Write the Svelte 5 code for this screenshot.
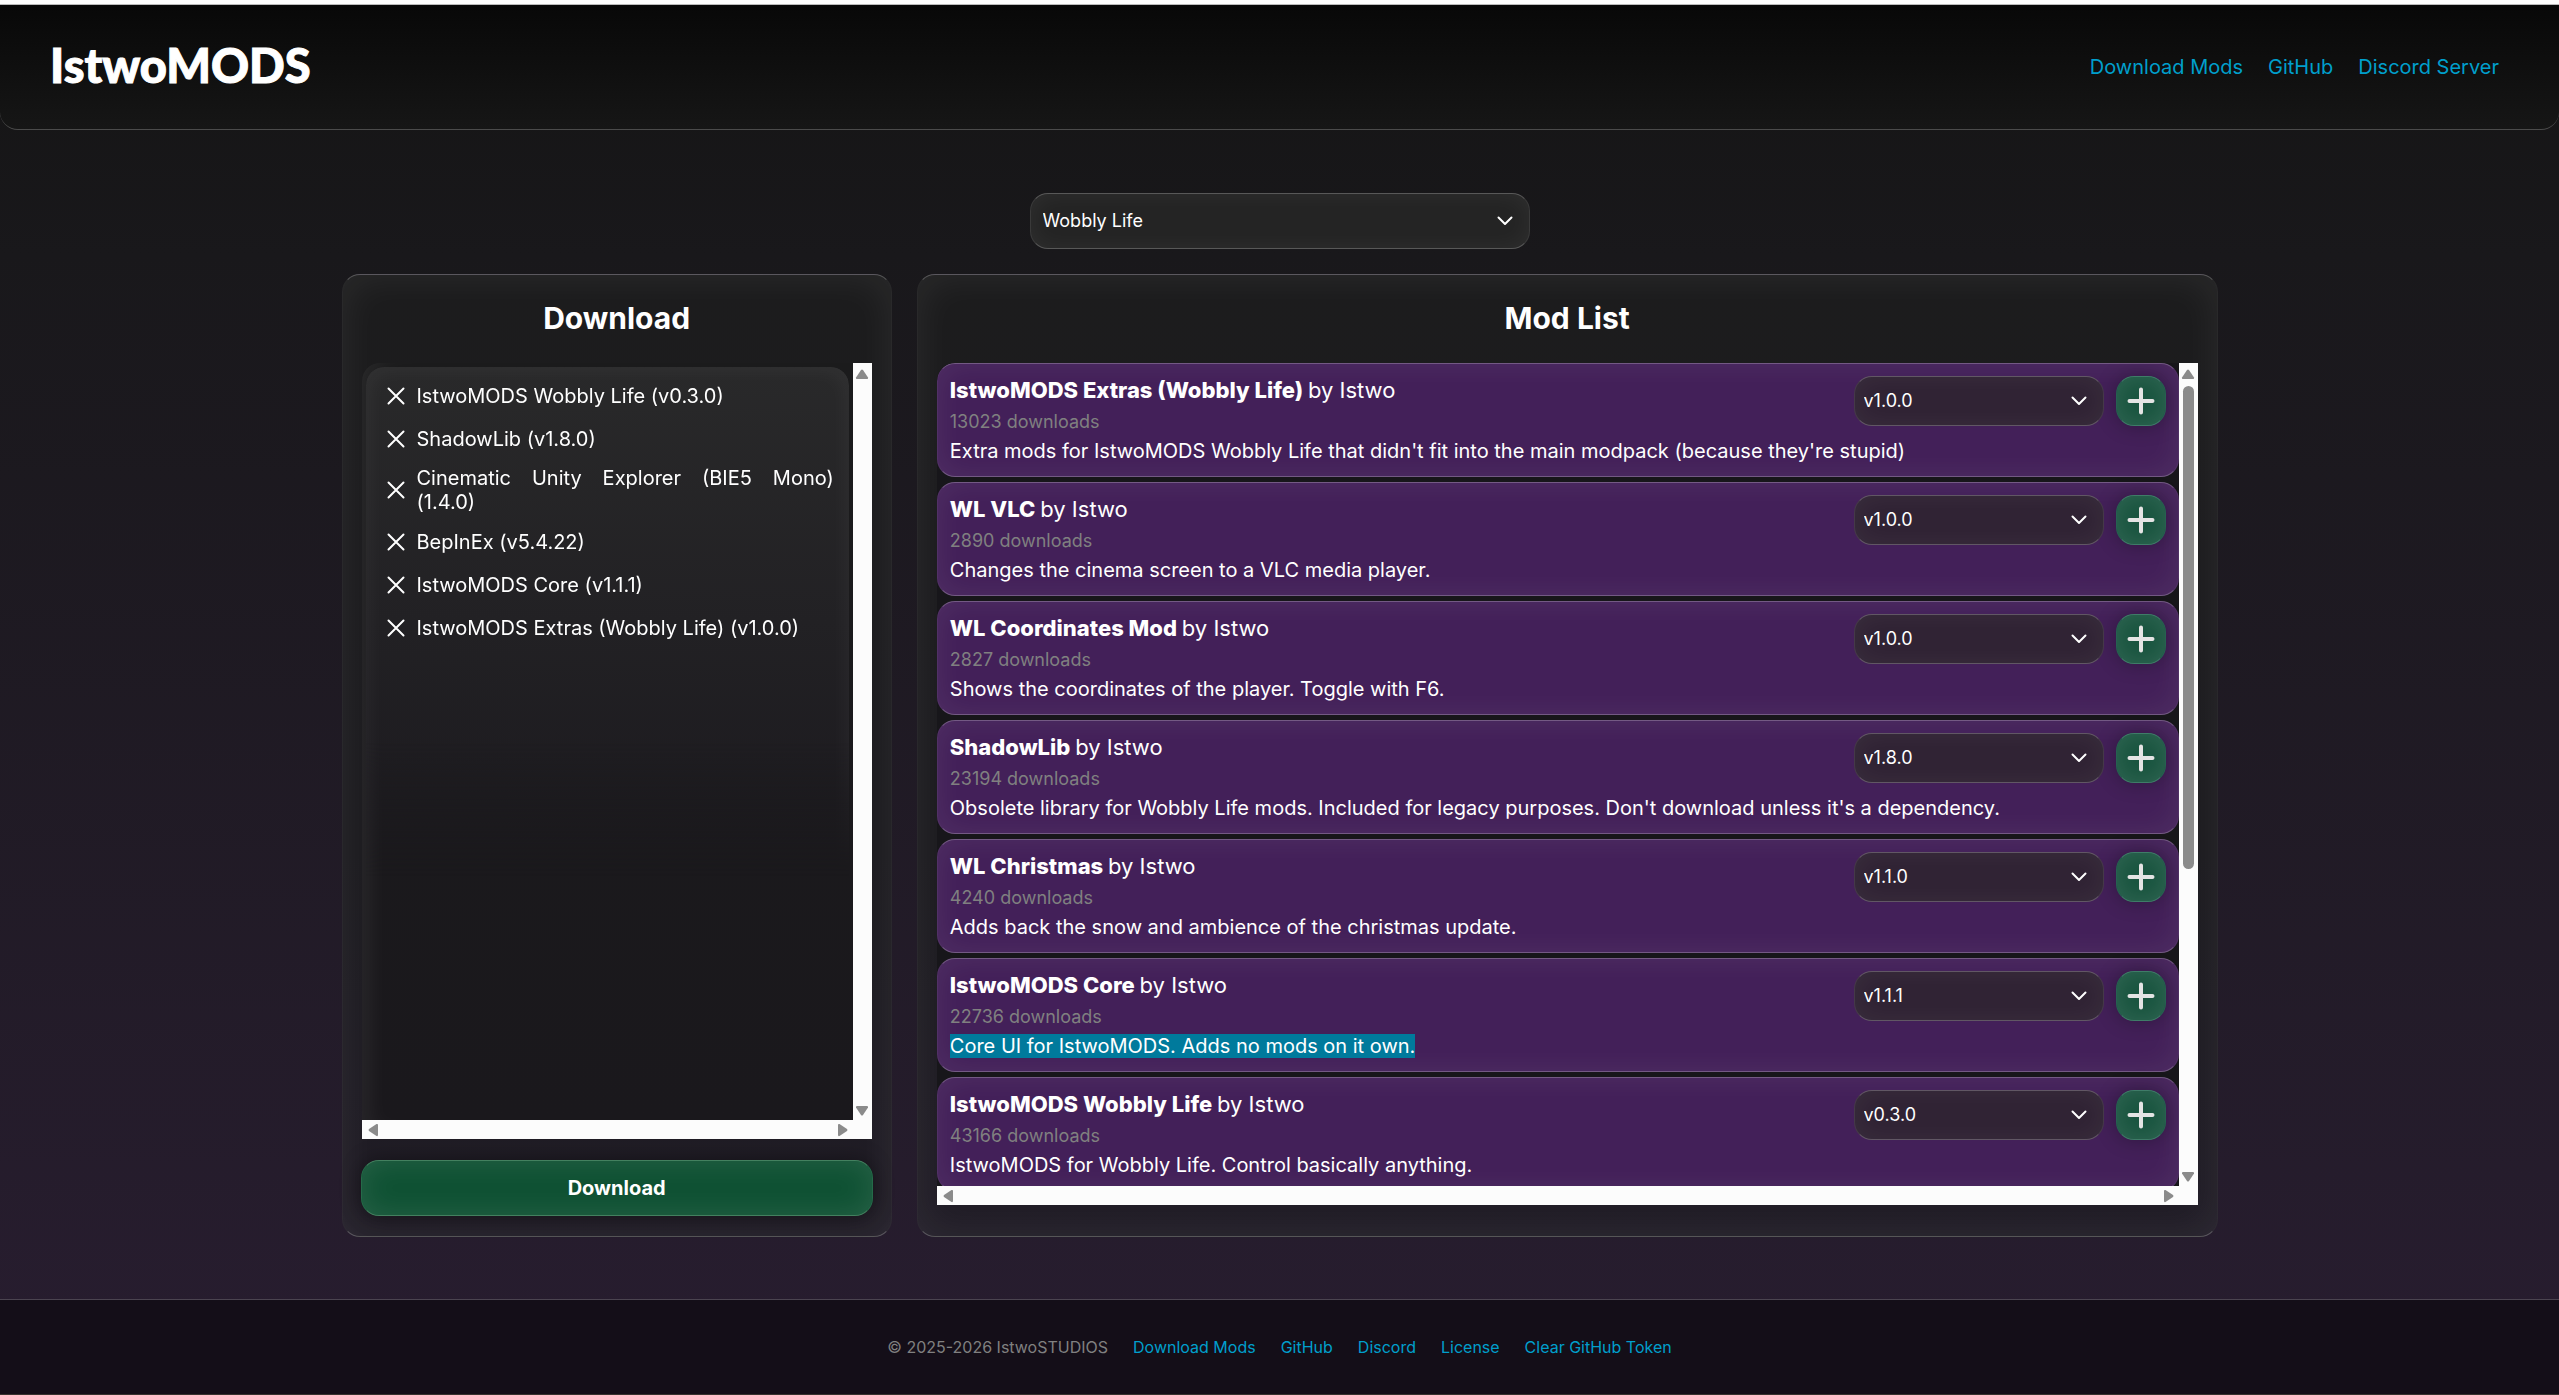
<script>
  const games = ['Wobbly Life'];

  const queue = [
    'IstwoMODS Wobbly Life (v0.3.0)',
    'ShadowLib (v1.8.0)',
    'Cinematic Unity Explorer (BIE5 Mono) (1.4.0)',
    'BepInEx (v5.4.22)',
    'IstwoMODS Core (v1.1.1)',
    'IstwoMODS Extras (Wobbly Life) (v1.0.0)',
  ];

  const mods = [
    { name: 'IstwoMODS Extras (Wobbly Life)', downloads: 13023, version: 'v1.0.0', text: "Extra mods for IstwoMODS Wobbly Life that didn't fit into the main modpack (because they're stupid)" },
    { name: 'WL VLC', downloads: 2890, version: 'v1.0.0', text: 'Changes the cinema screen to a VLC media player.' },
    { name: 'WL Coordinates Mod', downloads: 2827, version: 'v1.0.0', text: 'Shows the coordinates of the player. Toggle with F6.' },
    { name: 'ShadowLib', downloads: 23194, version: 'v1.8.0', text: "Obsolete library for Wobbly Life mods. Included for legacy purposes. Don't download unless it's a dependency." },
    { name: 'WL Christmas', downloads: 4240, version: 'v1.1.0', text: 'Adds back the snow and ambience of the christmas update.' },
    { name: 'IstwoMODS Core', downloads: 22736, version: 'v1.1.1', text: 'Core UI for IstwoMODS. Adds no mods on it own.', marked: true },
    { name: 'IstwoMODS Wobbly Life', downloads: 43166, version: 'v0.3.0', text: 'IstwoMODS for Wobbly Life. Control basically anything.' },
  ];

  const footerLinks = ['Download Mods', 'GitHub', 'Discord', 'License', 'Clear GitHub Token'];
</script>

{#snippet chevron()}
  <svg class="chevron" viewBox="0 0 16 10" aria-hidden="true"><path d="M1.5 1.5 8 8l6.500-6.500" /></svg>
{/snippet}

{#snippet arrow(dir)}
  <svg class="arrow {dir}" viewBox="0 0 14 14" aria-hidden="true"><path d="M6 3Q7 2 8 3L13 10.500Q13.500 12 12 12H2Q.5 12 1 10.500Z" /></svg>
{/snippet}

{#snippet scrollbars(thumb)}
  <div class="bar vertical">
    {@render arrow('up')}
    <div class="track">
      {#if thumb}<div class="thumb" style="height: {thumb}%"></div>{/if}
    </div>
    {@render arrow('down')}
  </div>
  <div class="bar horizontal">
    {@render arrow('left')}
    {@render arrow('right')}
  </div>
{/snippet}

<div class="page">
  <header>
    <a class="logo" href="#home">IstwoMODS</a>
    <nav>
      <a href="#mods">Download Mods</a>
      <a href="#github">GitHub</a>
      <a href="#discord">Discord Server</a>
    </nav>
  </header>

  <main>
    <div class="select game">
      <select aria-label="Game">
        {#each games as game}
          <option>{game}</option>
        {/each}
      </select>
      {@render chevron()}
    </div>

    <div class="panels">
      <section class="panel downloads">
        <h2>Download</h2>
        <div class="scroller">
          <div class="view">
            <ul>
              {#each queue as item}
                <li>
                  <button class="remove" aria-label="Remove {item}">
                    <svg viewBox="0 0 18 18"><path d="M1.500 1.500l15 15M16.500 1.500l-15 15" /></svg>
                  </button>
                  <span>{item}</span>
                </li>
              {/each}
            </ul>
          </div>
          {@render scrollbars(0)}
        </div>
        <button class="download">Download</button>
      </section>

      <section class="panel list">
        <h2>Mod List</h2>
        <div class="scroller">
          <div class="view">
            {#each mods as mod}
              <article>
                <div class="info">
                  <h3>{mod.name} <span>by Istwo</span></h3>
                  <p class="count">{mod.downloads} downloads</p>
                </div>
                <div class="select version">
                  <select aria-label="Version of {mod.name}">
                    <option>{mod.version}</option>
                  </select>
                  {@render chevron()}
                </div>
                <button class="add" aria-label="Add {mod.name}">
                  <svg viewBox="0 0 28 28"><path d="M14 2.500v23M2.500 14h23" /></svg>
                </button>
                <p class="text">{#if mod.marked}<mark>{mod.text}</mark>{:else}{mod.text}{/if}</p>
              </article>
            {/each}
          </div>
          {@render scrollbars(62)}
        </div>
      </section>
    </div>
  </main>

  <footer>
    <span>© 2025-2026 IstwoSTUDIOS</span>
    {#each footerLinks as link}
      <a href="#footer">{link}</a>
    {/each}
  </footer>
</div>

<style>
  :global(body) {
    background: #140e18;
  }
  .page {
    min-height: 100vh;
    box-sizing: border-box;
    display: flex;
    flex-direction: column;
    border-top: 4px solid #fff;
    border-bottom: 1px solid #38332f;
    background: linear-gradient(#141414, #19181b 18%, #281d30);
    color: #fff;
    font-family: Inter, "Liberation Sans", sans-serif;
    font-size: 20px;
    line-height: 24px;
  }
  a {
    color: #009fcc;
    text-decoration: none;
  }
  h2, h3, p, ul {
    margin: 0;
    padding: 0;
  }
  button, select {
    font: inherit;
    color: inherit;
    margin: 0;
    padding: 0;
    border: 0;
    background: none;
  }
  svg {
    display: block;
    fill: none;
    stroke: #fff;
    stroke-linecap: round;
    stroke-linejoin: round;
  }

  header {
    display: flex;
    align-items: center;
    justify-content: space-between;
    height: 124px;
    padding: 0 60px 0 50px;
    border-top: 1px solid #bbb;
    border-bottom: 1px solid #4b4b4b;
    border-radius: 0 0 18px 18px;
    background: linear-gradient(#080808, #161616);
  }
  .logo {
    padding-bottom: 4px;
    color: #fff;
    font-family: Lato, sans-serif;
    font-size: 47px;
    line-height: 56px;
    font-weight: 900;
    -webkit-text-stroke: 1px #fff;
  }
  nav {
    display: flex;
    gap: 25px;
  }

  main {
    flex: 1;
    display: flex;
    flex-direction: column;
    align-items: center;
    padding: 63px 25px 62px;
  }
  .select {
    position: relative;
    box-sizing: border-box;
    border: 1px solid rgba(255, 255, 255, .1);
    border-top-color: rgba(255, 255, 255, .24);
    border-bottom-color: rgba(255, 255, 255, .24);
    border-radius: 18px;
    background: #242424;
    box-shadow: inset 0 0 25px rgba(255, 255, 255, .05);
    font-size: 18px;
  }
  .select select {
    width: 100%;
    height: 100%;
    padding: 0 40px 0 12px;
    appearance: none;
    border-radius: 18px;
  }
  .chevron {
    position: absolute;
    top: 50%;
    right: 16px;
    width: 16px;
    height: 10px;
    margin-top: -5px;
    stroke-width: 2;
    pointer-events: none;
  }
  .game {
    width: 500px;
    height: 56px;
  }

  .panels {
    flex: 1;
    display: grid;
    grid-template-columns: 550fr 1300fr;
    gap: 25px;
    width: 100%;
    max-width: 1876px;
    margin-top: 25px;
  }
  .panel {
    box-sizing: border-box;
    display: flex;
    flex-direction: column;
    padding: 25px 18px 20px;
    border: 1px solid rgba(255, 255, 255, .06);
    border-top-color: rgba(255, 255, 255, .26);
    border-bottom-color: rgba(255, 255, 255, .26);
    border-radius: 18px;
    background: linear-gradient(#1c1c1d, #1c1b1f 60%, #211d27);
    box-shadow: inset 0 0 40px rgba(255, 255, 255, .07);
  }
  .list {
    padding-bottom: 31px;
  }
  h2 {
    margin-bottom: 27px;
    font-size: 30px;
    line-height: 36px;
    text-align: center;
  }
  .scroller {
    flex: 1;
    display: grid;
    grid-template: 1fr 19px / 1fr 19px;
    min-height: 0;
    margin: 0 1px;
  }
  .view {
    overflow: hidden;
    border-radius: 18px 0 0 0;
    background: #17161a;
  }
  .list .view {
    height: 823px;
  }
  .bar {
    display: flex;
    align-items: center;
    background: #fcfcfc;
  }
  .vertical {
    flex-direction: column;
    padding: 4px 0 2px;
  }
  .horizontal {
    grid-column: 1 / 3;
    justify-content: space-between;
    padding: 0 22px 0 4px;
  }
  .arrow {
    width: 14px;
    height: 14px;
    fill: #8b8b8b;
    stroke: none;
  }
  .down { transform: rotate(180deg); }
  .left { transform: rotate(270deg); }
  .right { transform: rotate(90deg); }
  .track {
    flex: 1;
    width: 11px;
    padding: 5px 0;
  }
  .thumb {
    border-radius: 6px;
    background: #8b8b8b;
  }

  .downloads .view {
    padding: 4px;
    background: linear-gradient(#1b1b1c, #1a181c);
    box-shadow: inset 20px 0 25px -15px rgba(255, 255, 255, .08);
  }
  ul {
    box-sizing: border-box;
    height: 100%;
    padding: 7px 15px 7px 17px;
    border-radius: 18px;
    background: linear-gradient(#29292a, #1b191e 68%);
    box-shadow: inset 0 0 25px rgba(255, 255, 255, .06);
    list-style: none;
    mask-image: linear-gradient(#000 50%, transparent 68%);
  }
  li {
    display: flex;
    align-items: center;
    gap: 8px;
    min-height: 31px;
    padding: 6px 0;
    text-align: justify;
  }
  .remove {
    flex: none;
    width: 26px;
    padding: 0 4px;
  }
  .remove svg {
    width: 18px;
    height: 18px;
    stroke-width: 2;
  }
  .download {
    height: 56px;
    margin-top: 21px;
    border: 1px solid #256a49;
    border-top-color: #43805f;
    border-bottom-color: #43805f;
    border-radius: 18px;
    background: #0f5133;
    box-shadow: inset 0 0 30px rgba(255, 255, 255, .1), 0 0 20px rgba(0, 0, 0, .4);
    font-weight: 700;
  }

  article {
    box-sizing: border-box;
    display: grid;
    grid-template-columns: 1fr 250px 50px;
    align-content: start;
    column-gap: 12px;
    height: 114px;
    margin-bottom: 5px;
    padding: 12px;
    border: 1px solid rgba(255, 255, 255, .08);
    border-top-color: rgba(255, 255, 255, .26);
    border-bottom-color: rgba(255, 255, 255, .26);
    border-radius: 18px;
    background: #432059;
    box-shadow: inset 0 0 30px rgba(255, 255, 255, .07);
  }
  h3 {
    font-size: 22px;
    line-height: 29px;
    font-weight: 800;
  }
  h3 span {
    font-weight: 400;
  }
  .count {
    margin: 6px 0;
    color: #808080;
    font-size: 18px;
    line-height: 22px;
  }
  .text {
    grid-column: 1 / 4;
  }
  mark {
    background: #007a9c;
    color: #fff;
  }
  .version {
    height: 50px;
    background: #302334;
  }
  .version select {
    padding-left: 9px;
  }
  .add {
    display: grid;
    place-items: center;
    box-sizing: border-box;
    height: 50px;
    border: 1px solid #276152;
    border-top-color: #3f7c68;
    border-bottom-color: #3f7c68;
    border-radius: 18px;
    background: #1a5540;
    box-shadow: inset 0 0 20px rgba(255, 255, 255, .1), 0 0 20px rgba(0, 0, 0, .3);
  }
  .add svg {
    width: 28px;
    height: 28px;
    stroke: #e4e4e4;
    stroke-width: 4;
  }

  footer {
    display: flex;
    justify-content: center;
    align-items: center;
    gap: 25px;
    height: 94px;
    border-top: 1px solid #4b4450;
    background: #140e18;
    color: #808080;
    font-size: 16px;
  }
</style>
